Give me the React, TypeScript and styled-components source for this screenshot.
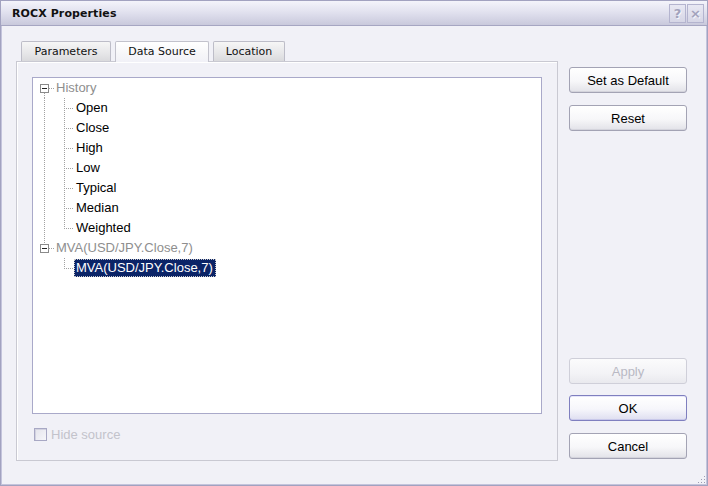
import React from "react";
import styled, { createGlobalStyle, css } from "styled-components";

const GlobalStyle = createGlobalStyle`
  html, body {
    margin: 0;
    padding: 0;
    background: #f1f1f7;
  }
  * {
    box-sizing: border-box;
  }
`;

const UI_FONT = `"Liberation Sans", Arial, sans-serif`;
const TAB_FONT = `"DejaVu Sans", Verdana, sans-serif`;

const Window = styled.div`
  position: relative;
  width: 708px;
  height: 486px;
  display: flex;
  flex-direction: column;
  background: #f1f1f7;
  border: 1px solid #a2a2c0;
  box-shadow: inset 1px 0 0 #c4c4dc, inset -1px 0 0 #c4c4dc,
    inset 0 -1px 0 #c4c4dc;
  font-family: ${UI_FONT};
`;

const TitleBar = styled.div`
  height: 25px;
  flex: none;
  display: flex;
  align-items: center;
  padding: 0 3px 0 11px;
  background: linear-gradient(180deg, #f4f4fb 0%, #e2e2ef 45%, #c9c9dc 100%);
  border-bottom: 1px solid #a6a6c2;
`;

const Title = styled.div`
  flex: 1;
  font-family: ${TAB_FONT};
  font-weight: bold;
  font-size: 11px;
  color: #111;
  letter-spacing: 0.1px;
`;

const CaptionButton = styled.div`
  width: 17px;
  height: 19px;
  margin-left: 1px;
  display: flex;
  align-items: center;
  justify-content: center;
  border: 1px solid #b4b4cf;
  background: linear-gradient(180deg, #e8e8f3 0%, #d6d6e6 100%);
  color: #a2a2bc;
  font-family: ${TAB_FONT};
  font-weight: bold;
  font-size: 13px;
  text-shadow: 1px 1px 0 #f4f4fa;
`;

const Body = styled.div`
  flex: 1;
  display: flex;
  padding: 14px 0 0 15px;
`;

const LeftColumn = styled.div`
  width: 542px;
  display: flex;
  flex-direction: column;
`;

const TabStrip = styled.div`
  height: 21px;
  display: flex;
  align-items: flex-end;
  gap: 4px;
  padding-left: 5px;
`;

const Tab = styled.div<{ $width: number; $active?: boolean }>`
  width: ${({ $width }) => $width}px;
  height: 20px;
  display: flex;
  align-items: center;
  justify-content: center;
  font-family: ${TAB_FONT};
  font-size: 11px;
  color: #111;
  border: 1px solid #bdbdc8;
  border-bottom: none;
  border-radius: 2px 2px 0 0;
  background: linear-gradient(180deg, #f6f6f6 0%, #e6e6e8 60%, #dadadd 100%);
  ${({ $active }) =>
    $active &&
    css`
      position: relative;
      z-index: 1;
      height: 21px;
      margin-bottom: -1px;
      padding-bottom: 1px;
      background: linear-gradient(180deg, #ffffff 0%, #f6f6f9 60%, #f1f1f7 100%);
      border-color: #c2c2cc;
    `}
`;

const Panel = styled.div`
  height: 400px;
  display: flex;
  flex-direction: column;
  padding: 15px;
  border: 1px solid #c9c9d2;
  box-shadow: inset 1px 1px 0 #ffffff;
`;

const TreeBox = styled.div`
  height: 337px;
  background: #ffffff;
  border: 1px solid #a9a9c9;
  padding-left: 1px;
  font-size: 13px;
  color: #000;
`;

const Row = styled.div`
  height: 20px;
  display: flex;
  align-items: center;
`;

const Label = styled.span<{ $dim?: boolean; $selected?: boolean }>`
  height: 18px;
  line-height: 18px;
  padding: 0 2px;
  white-space: nowrap;
  color: ${({ $dim }) => ($dim ? "#8e8e8e" : "#000")};
  ${({ $selected }) =>
    $selected &&
    css`
      padding: 0 3px 0 2px;
      color: #ffffff;
      background: #0b2467;
      outline: 1px dotted #c9c9c9;
      outline-offset: -1px;
    `}
`;

const CheckRow = styled.label`
  margin-top: 14px;
  height: 13px;
  display: flex;
  align-items: center;
  gap: 4px;
  padding-left: 2px;
  font-size: 13px;
  color: #c3c3cb;
`;

const CheckBox = styled.span`
  width: 13px;
  height: 13px;
  border: 1px solid #a8a8c4;
  background: linear-gradient(135deg, #e4e4ec 0%, #f6f6fa 100%);
  box-shadow: inset 1px 1px 0 #d2d2e0;
`;

const RightColumn = styled.div`
  width: 118px;
  margin-left: 11px;
  display: flex;
  flex-direction: column;
  padding: 27px 0 26px;
`;

const Spacer = styled.div`
  flex: 1;
`;

const Button = styled.div<{ $gap?: number; $default?: boolean; $disabled?: boolean }>`
  height: 26px;
  margin-top: ${({ $gap }) => $gap ?? 0}px;
  display: flex;
  align-items: center;
  justify-content: center;
  font-size: 13px;
  color: #000;
  border: 1px solid #a3a3b4;
  border-radius: 3px;
  background: linear-gradient(180deg, #ffffff 0%, #f7f7f9 55%, #e2e2e8 100%);
  box-shadow: inset 0 -1px 0 #d4d4dc;
  ${({ $default }) =>
    $default &&
    css`
      border-color: #7f7fbf;
      background: linear-gradient(180deg, #ffffff 0%, #f6f6fb 55%, #dedef0 100%);
      box-shadow: inset 0 -1px 0 #c8c8ea, inset 0 1px 0 #e6e6fa;
    `}
  ${({ $disabled }) =>
    $disabled &&
    css`
      color: #b9b9c4;
      border-color: #cfcfd9;
      background: linear-gradient(180deg, #fbfbfc 0%, #f3f3f6 60%, #e9e9ee 100%);
      box-shadow: none;
    `}
`;

const Grip = styled.svg`
  position: absolute;
  right: 1px;
  bottom: 1px;
`;

type CellKind = "blank" | "pipe" | "tee" | "elbow" | "open" | "openLast";

const DOT = "#a2a2a2";

const Cell = ({ kind }: { kind: CellKind }) => {
  const v = 10.5;
  const h = 10.5;
  return (
    <svg width={20} height={20} style={{ flex: "none" }} shapeRendering="crispEdges">
      {(kind === "pipe" || kind === "tee") && (
        <line x1={v} y1={0} x2={v} y2={20} stroke={DOT} strokeDasharray="1 1" />
      )}
      {(kind === "tee" || kind === "elbow") && (
        <line x1={v + 1} y1={h} x2={20} y2={h} stroke={DOT} strokeDasharray="1 1" />
      )}
      {kind === "elbow" && (
        <line x1={v} y1={0} x2={v} y2={h + 1} stroke={DOT} strokeDasharray="1 1" />
      )}
      {(kind === "open" || kind === "openLast") && (
        <>
          {kind === "open" && (
            <line x1={v} y1={15} x2={v} y2={20} stroke={DOT} strokeDasharray="1 1" />
          )}
          {kind === "openLast" && (
            <line x1={v} y1={0} x2={v} y2={6} stroke={DOT} strokeDasharray="1 1" />
          )}
          <line x1={15} y1={h} x2={20} y2={h} stroke={DOT} strokeDasharray="1 1" />
          <rect x={6.5} y={6.5} width={8} height={8} fill="#fff" stroke="#8a8a8a" />
          <line x1={8} y1={h} x2={13} y2={h} stroke="#222" />
        </>
      )}
    </svg>
  );
};

type Node = {
  cells: CellKind[];
  text: string;
  dim?: boolean;
  selected?: boolean;
};

const history = ["Open", "Close", "High", "Low", "Typical", "Median", "Weighted"];

const nodes: Node[] = [
  { cells: ["open"], text: "History", dim: true },
  ...history.map((t, i) => ({
    cells: ["pipe", i === history.length - 1 ? "elbow" : "tee"] as CellKind[],
    text: t,
  })),
  { cells: ["openLast"], text: "MVA(USD/JPY.Close,7)", dim: true },
  { cells: ["blank", "elbow"], text: "MVA(USD/JPY.Close,7)", selected: true },
];

export default function App() {
  return (
    <>
      <GlobalStyle />
      <Window>
        <TitleBar>
          <Title>ROCX Properties</Title>
          <CaptionButton>?</CaptionButton>
          <CaptionButton>×</CaptionButton>
        </TitleBar>
        <Body>
          <LeftColumn>
            <TabStrip>
              <Tab $width={90}>Parameters</Tab>
              <Tab $width={94} $active>
                Data Source
              </Tab>
              <Tab $width={72}>Location</Tab>
            </TabStrip>
            <Panel>
              <TreeBox>
                {nodes.map((n, i) => (
                  <Row key={i}>
                    {n.cells.map((c, j) => (
                      <Cell key={j} kind={c} />
                    ))}
                    <Label $dim={n.dim} $selected={n.selected}>
                      {n.text}
                    </Label>
                  </Row>
                ))}
              </TreeBox>
              <CheckRow>
                <CheckBox />
                Hide source
              </CheckRow>
            </Panel>
          </LeftColumn>
          <RightColumn>
            <Button>Set as Default</Button>
            <Button $gap={12}>Reset</Button>
            <Spacer />
            <Button $disabled>Apply</Button>
            <Button $gap={11} $default>
              OK
            </Button>
            <Button $gap={12}>Cancel</Button>
          </RightColumn>
        </Body>
        <Grip width={8} height={8} viewBox="0 0 8 8">
          {[
            [6, 0],
            [6, 3],
            [3, 3],
            [6, 6],
            [3, 6],
            [0, 6],
          ].map(([x, y], i) => (
            <rect key={i} x={x} y={y} width={1} height={1} fill="#9c9cb4" />
          ))}
        </Grip>
      </Window>
    </>
  );
}
